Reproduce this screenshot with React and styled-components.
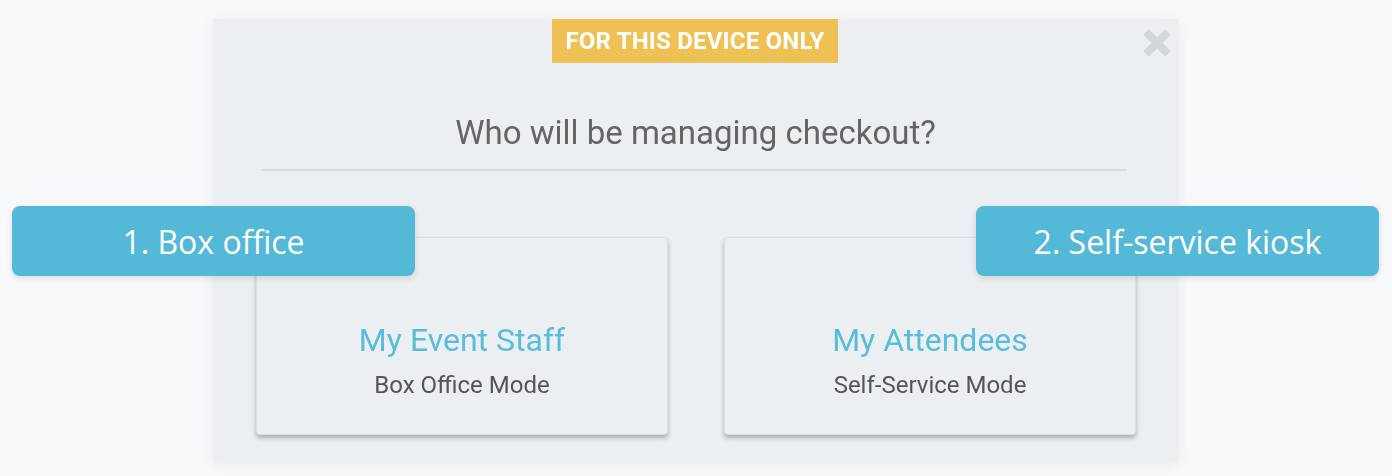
import React from 'react';
import styled, { createGlobalStyle } from 'styled-components';

const GlobalStyle = createGlobalStyle`
	html, body {
		margin: 0;
		padding: 0;
		background: #f8f9fb;
	}
	body {
		font-family: Roboto, "Liberation Sans", sans-serif;
	}
`;

const Page = styled.div`
	position: relative;
	width: 1392px;
	height: 476px;
	overflow: hidden;
	padding-top: 19px;
	box-sizing: border-box;
`;

const Modal = styled.div`
	position: relative;
	width: 965px;
	height: 444px;
	margin-left: 213px;
	box-sizing: border-box;
	background: #eceff2;
	box-shadow: 0 2px 12px rgba(40, 50, 60, 0.08);
	display: flex;
	flex-direction: column;
	align-items: center;
	filter: blur(0.6px);
`;

const Badge = styled.div`
	background: #efc154;
	color: #fff;
	font-weight: 700;
	font-size: 24px;
	letter-spacing: 0.2px;
	height: 44px;
	line-height: 44px;
	padding: 0 13px;
	margin-left: -1px;
`;

const Close = styled.div`
	position: absolute;
	top: 8px;
	right: 5px;
	width: 32px;
	height: 32px;
	color: #d2d7db;
`;

const Title = styled.h2`
	margin: 50px 0 0;
	font-weight: 400;
	font-size: 33px;
	color: #636567;
	line-height: 40px;
`;

const Divider = styled.hr`
	width: 866px;
	margin: 16px 0 0 -3px;
	border: 0;
	border-top: 2px solid #d9dde1;
`;

const Options = styled.div`
	display: flex;
	gap: 56px;
	margin-top: 66px;
	margin-left: 1px;
`;

const Card = styled.div`
	width: 412px;
	height: 198px;
	box-sizing: border-box;
	background: #eceff2;
	border: 1px solid #dde0e3;
	border-radius: 4px;
	box-shadow: 0 3px 4px rgba(70, 75, 80, 0.4);
	display: flex;
	flex-direction: column;
	align-items: center;
	justify-content: center;
	padding-top: 48px;
`;

const CardName = styled.div`
	font-size: 32px;
	color: #58bdd9;
	line-height: 38px;
`;

const CardMode = styled.div`
	font-size: 24px;
	color: #545557;
	margin-top: 12px;
	line-height: 28px;
`;

const Callout = styled.div`
	position: absolute;
	top: 206px;
	left: ${(props) => props.left}px;
	width: 403px;
	height: 70px;
	background: #54b9d7;
	border-radius: 8px;
	box-shadow: 0 2px 6px rgba(0, 0, 0, 0.12);
	color: #fff;
	font-family: "Open Sans", "Liberation Sans", sans-serif;
	font-size: 32px;
	display: flex;
	align-items: center;
	justify-content: center;
	box-sizing: border-box;
`;

const CloseIcon = () => (
	<svg viewBox="0 0 32 32" width="32" height="32">
		<path d="M5 5 L27 27 M27 5 L5 27" stroke="currentColor" strokeWidth="8" strokeLinecap="butt" />
	</svg>
);

const options = [
	{ name: 'My Event Staff', mode: 'Box Office Mode' },
	{ name: 'My Attendees', mode: 'Self-Service Mode' },
];

const App = () => {
	return (
		<>
			<GlobalStyle />
			<Page>
				<Modal>
					<Badge>FOR THIS DEVICE ONLY</Badge>
					<Close>
						<CloseIcon />
					</Close>
					<Title>Who will be managing checkout?</Title>
					<Divider />
					<Options>
						{options.map((option) => (
							<Card key={option.name}>
								<CardName>{option.name}</CardName>
								<CardMode>{option.mode}</CardMode>
							</Card>
						))}
					</Options>
				</Modal>
				<Callout left={12}>1. Box office</Callout>
				<Callout left={976}>2. Self-service kiosk</Callout>
			</Page>
		</>
	);
};

export default App;
